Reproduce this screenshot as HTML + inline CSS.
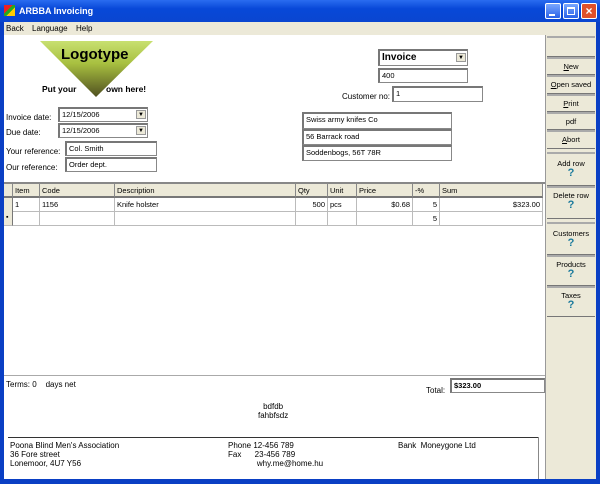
<!DOCTYPE html>
<html><head><style>
*{margin:0;padding:0;box-sizing:border-box}
body{width:600px;height:484px;overflow:hidden;background:#0a3fc4;font-family:"Liberation Sans",sans-serif;font-size:8px;color:#000;position:relative}
.a{position:absolute}
.tb{left:0;top:0;width:600px;height:22px;background:linear-gradient(#2a6cf0,#0848d8 40%,#0a46d0);}
.menu{left:4px;top:22px;width:592px;height:13px;background:#ece9d8;}
.main{left:4px;top:35px;width:541px;height:444px;background:#fff}
.side{left:545px;top:35px;width:51px;height:444px;background:#ece9d8;border-left:1px solid #999}
.btn{position:absolute;left:547px;width:48px;background:#ece9d8;border-top:2px solid #aaa;border-bottom:1px solid #777;text-align:center;font-size:7.5px}
.q{color:#1a7a9c;font-weight:bold;font-size:11px;line-height:11px}
.in{position:absolute;background:#fff;border:1px solid #888;border-top:2px solid #777;border-left:2px solid #777;padding-left:2px;font-size:7.5px;line-height:11px}
.dd{position:absolute;right:1px;top:1px;width:10px;height:9px;background:#ece9d8;border:1px solid #999;font-size:6px;text-align:center;line-height:8px}
.h{position:absolute;top:184px;height:14px;background:#ece9d8;border-right:1px solid #888;border-bottom:2px solid #777;padding-left:2px;font-size:7.5px;line-height:13px}
.c{position:absolute;height:14px;border-right:1px solid #bbb;border-bottom:1px solid #bbb;font-size:7.5px;line-height:13px;padding:0 2px}
.wb{position:absolute;top:3px;width:16px;height:16px;background:linear-gradient(#7aa8ff,#2a62e8);border:1px solid #fff;border-radius:2px}
</style></head><body>
<div class="a tb"></div>
<div class="a" style="left:4px;top:5px;width:11px;height:11px;background:linear-gradient(135deg,#e22 0 40%,#2a2 40% 60%,#fc0 60%)"></div>
<div class="a" style="left:19px;top:6px;color:#fff;font-weight:bold;font-size:9px">ARBBA Invoicing</div>
<div class="wb" style="left:545px"><div class="a" style="left:3px;top:10px;width:6px;height:2px;background:#fff"></div></div>
<div class="wb" style="left:563px"><div class="a" style="left:3px;top:3px;width:8px;height:8px;border:1px solid #fff;border-top-width:2px"></div></div>
<div class="a" style="left:581px;top:3px;width:16px;height:16px;background:#e0502a;border:1px solid #fff;border-radius:2px;color:#fff;font-size:12px;text-align:center;line-height:14px;font-weight:bold">×</div>
<div class="a menu"><span class="a" style="left:2px;top:2px">Back</span><span class="a" style="left:28px;top:2px">Language</span><span class="a" style="left:72px;top:2px">Help</span></div>
<div class="a main"></div>
<div class="a side"></div>
<svg class="a" style="left:40px;top:41px" width="115" height="58"><defs><linearGradient id="g" x1="0" y1="0" x2="0" y2="1"><stop offset="0" stop-color="#c8e070"/><stop offset=".4" stop-color="#a8c040"/><stop offset="1" stop-color="#505020"/></linearGradient></defs><polygon points="0,0 113,0 56,56" fill="url(#g)"/></svg>
<div class="a" style="left:61px;top:46px;font-size:15px;font-weight:bold">Logotype</div>
<div class="a" style="left:42px;top:84px;font-size:8.5px;font-weight:bold">Put your</div>
<div class="a" style="left:106px;top:84px;font-size:8.5px;font-weight:bold">own here!</div>
<div class="a" style="left:6px;top:113px">Invoice date:</div>
<div class="a" style="left:6px;top:128px">Due date:</div>
<div class="a" style="left:6px;top:147px">Your reference:</div>
<div class="a" style="left:6px;top:163px">Our reference:</div>
<div class="in" style="left:58px;top:107px;width:90px;height:15px">12/15/2006<div class="dd">▼</div></div>
<div class="in" style="left:58px;top:123px;width:90px;height:15px">12/15/2006<div class="dd">▼</div></div>
<div class="in" style="left:65px;top:141px;width:92px;height:15px">Col. Smith</div>
<div class="in" style="left:65px;top:157px;width:92px;height:15px">Order dept.</div>
<div class="in" style="left:378px;top:49px;width:90px;height:17px;font-weight:bold;font-size:10px;line-height:13px">Invoice<div class="dd" style="top:2px">▼</div></div>
<div class="in" style="left:378px;top:68px;width:90px;height:15px">400</div>
<div class="a" style="left:342px;top:92px">Customer no:</div>
<div class="in" style="left:392px;top:86px;width:91px;height:16px">1</div>
<div class="in" style="left:302px;top:112px;width:150px;height:17px">Swiss army knifes Co</div>
<div class="in" style="left:302px;top:129px;width:150px;height:16px">56 Barrack road</div>
<div class="in" style="left:302px;top:145px;width:150px;height:16px">Soddenbogs,  56T 78R</div>
<div class="btn" style="top:36px;height:21px"></div>
<div class="btn" style="top:57px;height:18px;line-height:15px"><u>N</u>ew</div>
<div class="btn" style="top:75px;height:19px;line-height:16px"><u>O</u>pen saved</div>
<div class="btn" style="top:94px;height:18px;line-height:15px"><u>P</u>rint</div>
<div class="btn" style="top:112px;height:18px;line-height:15px">pdf</div>
<div class="btn" style="top:130px;height:19px;line-height:16px"><u>A</u>bort</div>
<div class="btn" style="top:152px;height:34px;padding-top:5px">Add row<div class="q">?</div></div>
<div class="btn" style="top:186px;height:33px;padding-top:3px">Delete row<div class="q">?</div></div>
<div class="btn" style="top:222px;height:33px;padding-top:5px">Customers<div class="q">?</div></div>
<div class="btn" style="top:255px;height:31px;padding-top:3px">Products<div class="q">?</div></div>
<div class="btn" style="top:286px;height:31px;padding-top:3px">Taxes<div class="q">?</div></div>
<div class="a" style="left:4px;top:182px;width:541px;height:194px;border-top:2px solid #888;border-bottom:1px solid #aaa"></div>
<div class="h" style="left:4px;width:9px"></div>
<div class="h" style="left:13px;width:27px">Item</div>
<div class="h" style="left:40px;width:75px">Code</div>
<div class="h" style="left:115px;width:181px">Description</div>
<div class="h" style="left:296px;width:32px">Qty</div>
<div class="h" style="left:328px;width:29px">Unit</div>
<div class="h" style="left:357px;width:56px">Price</div>
<div class="h" style="left:413px;width:27px">-%</div>
<div class="h" style="left:440px;width:103px">Sum</div>
<div class="c" style="left:4px;top:198px;width:9px;height:28px;background:#ece9d8;border-right:1px solid #777"></div>
<div class="a" style="left:6px;top:214px;font-size:7px">▪</div>
<div class="c" style="left:13px;top:198px;width:27px">1</div>
<div class="c" style="left:40px;top:198px;width:75px">1156</div>
<div class="c" style="left:115px;top:198px;width:181px">Knife holster</div>
<div class="c" style="left:296px;top:198px;width:32px;text-align:right">500</div>
<div class="c" style="left:328px;top:198px;width:29px">pcs</div>
<div class="c" style="left:357px;top:198px;width:56px;text-align:right">$0.68</div>
<div class="c" style="left:413px;top:198px;width:27px;text-align:right">5</div>
<div class="c" style="left:440px;top:198px;width:103px;text-align:right">$323.00</div>
<div class="c" style="left:13px;top:212px;width:27px"></div>
<div class="c" style="left:40px;top:212px;width:75px"></div>
<div class="c" style="left:115px;top:212px;width:181px"></div>
<div class="c" style="left:296px;top:212px;width:32px"></div>
<div class="c" style="left:328px;top:212px;width:29px"></div>
<div class="c" style="left:357px;top:212px;width:56px"></div>
<div class="c" style="left:413px;top:212px;width:27px;text-align:right">5</div>
<div class="c" style="left:440px;top:212px;width:103px"></div>
<div class="a" style="left:6px;top:380px">Terms: 0 &nbsp;&nbsp; days net</div>
<div class="a" style="left:426px;top:386px">Total:</div>
<div class="in" style="left:450px;top:378px;width:95px;height:15px;font-weight:bold">$323.00</div>
<div class="a" style="left:258px;top:402px;text-align:center;line-height:9px">bdfdb<br>fahbfsdz</div>
<div class="a" style="left:8px;top:437px;width:530px;height:1px;background:#333"></div>
<div class="a" style="left:538px;top:437px;width:1px;height:42px;background:#888"></div>
<div class="a" style="left:10px;top:441px;line-height:9px">Poona Blind Men's Association<br>36 Fore street<br>Lonemoor, 4U7 Y56</div>
<div class="a" style="left:228px;top:441px;line-height:9px">Phone 12-456 789<br>Fax &nbsp;&nbsp;&nbsp;&nbsp;&nbsp;23-456 789<br>&nbsp;&nbsp;&nbsp;&nbsp;&nbsp;&nbsp;&nbsp;&nbsp;&nbsp;&nbsp;&nbsp;&nbsp;&nbsp;why.me@home.hu</div>
<div class="a" style="left:398px;top:441px">Bank &nbsp;Moneygone Ltd</div>
</body></html>
